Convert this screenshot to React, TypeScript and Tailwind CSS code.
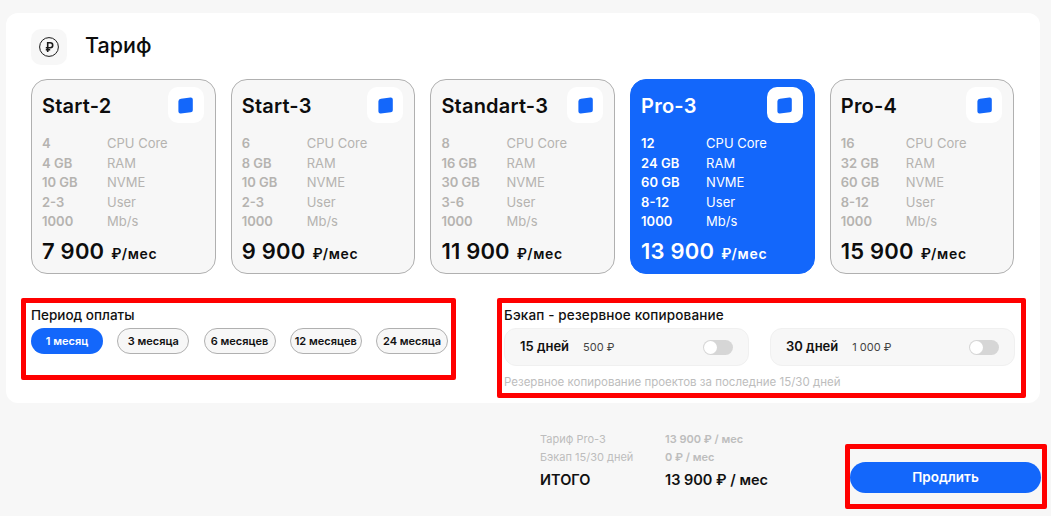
const font = { fontFamily: '"Inter", "Noto Sans", sans-serif' };

const plans = [
  { name: 'Start-2', specs: ['4', '4 GB', '10 GB', '2-3', '1000'], price: '7 900' },
  { name: 'Start-3', specs: ['6', '8 GB', '10 GB', '2-3', '1000'], price: '9 900' },
  { name: 'Standart-3', specs: ['8', '16 GB', '30 GB', '3-6', '1000'], price: '11 900' },
  { name: 'Pro-3', specs: ['12', '24 GB', '60 GB', '8-12', '1000'], price: '13 900', active: true },
  { name: 'Pro-4', specs: ['16', '32 GB', '60 GB', '8-12', '1000'], price: '15 900' },
];

const specLabels = ['CPU Core', 'RAM', 'NVME', 'User', 'Mb/s'];
const periods = ['1 месяц', '3 месяца', '6 месяцев', '12 месяцев', '24 месяца'];

const RubleIcon = () => (
  <svg width="20" height="20" viewBox="0 0 20 20" fill="none" stroke="#1a1a1a">
    <circle cx="10" cy="10" r="9.4" strokeWidth="1" />
    <path d="M8.7 15V5.8h2.5a2.5 2.5 0 0 1 0 5H6.8M6.8 12.8h4.4" strokeWidth="1.6" />
  </svg>
);

const TileIcon = () => (
  <svg width="15" height="17" viewBox="0 0 15 17" fill="#1367fb">
    <path d="M3 1.8 12.4.4A2.2 2.2 0 0 1 14.8 2.6v10.6a2.2 2.2 0 0 1-2 2.1l-10 1.2A2.2 2.2 0 0 1 .4 14.4V4.3A2.6 2.6 0 0 1 3 1.8Z" />
  </svg>
);

const Toggle = () => (
  <div className="flex h-[15px] w-[30px] items-center rounded-full bg-[#d6d6d6]">
    <div className="h-[13px] w-[13px] translate-x-px rounded-full bg-white" />
  </div>
);

const PlanCard = ({ plan }: { plan: (typeof plans)[number] }) => {
  const active = plan.active;
  return (
    <div
      className={`h-[195px] rounded-[16px] border pt-[7px] pr-[11px] pl-[10px] ${
        active ? 'border-[#1367fb] bg-[#1367fb] text-white' : 'border-[#b0b0b0] bg-[#f7f7f7] text-[#0d0d0d]'
      }`}
    >
      <div className="flex items-start justify-between">
        <div className="pt-[6px] text-[20px] leading-[26px] font-semibold tracking-[0.2px]">{plan.name}</div>
        <div className="flex h-[36px] w-[36px] items-center justify-center rounded-[10px] bg-white">
          <TileIcon />
        </div>
      </div>
      <div className={`mt-[11px] text-[13px] leading-[19.6px] ${active ? 'text-white' : 'text-[#b5b3b0]'}`}>
        {plan.specs.map((spec, i) => (
          <div key={i} className="flex">
            <div className="w-[65px] font-semibold">{spec}</div>
            <div>{specLabels[i]}</div>
          </div>
        ))}
      </div>
      <div className="mt-[4px] flex items-baseline gap-[7px]">
        <span className="text-[22px] leading-[30px] font-semibold tracking-[0.2px]">{plan.price}</span>
        <span className="text-[14px] font-semibold tracking-[0.7px]">₽/мес</span>
      </div>
    </div>
  );
};

const BackupOption = ({ days, price }: { days: string; price: string }) => (
  <div className="flex h-[38px] w-[245px] items-center gap-[14px] rounded-[12px] border border-[#f0f0f0] bg-[#f7f7f7] px-[15px]">
    <span className="text-[13px] font-semibold text-[#111]">{days}</span>
    <span className="text-[11px] text-[#444]">{price}</span>
    <div className="ml-auto">
      <Toggle />
    </div>
  </div>
);

export default function App() {
  return (
    <div style={font} className="h-[516px] w-[1051px] overflow-hidden bg-[#f7f7f7] pt-[13px] pl-[6px]">
      <div className="h-[390px] w-[1034px] rounded-[12px] bg-white">
        <div className="flex items-center gap-[18px] pt-[16px] pl-[25px]">
          <div className="flex h-[36px] w-[36px] items-center justify-center rounded-[10px] bg-[#f7f7f7]">
            <RubleIcon />
          </div>
          <div className="mt-[-4px] text-[21.5px] font-medium text-[#0d0d0d]">Тариф</div>
        </div>

        <div className="mt-[14px] ml-[25px] grid w-[983.5px] grid-cols-5 gap-[15px]">
          {plans.map((plan) => (
            <PlanCard key={plan.name} plan={plan} />
          ))}
        </div>

        <div className="mt-[24px] ml-[15px] flex items-start gap-[41px]">
          <div className="h-[82px] w-[435px] rounded-[2px] border-[5px] border-[#ff0000] pt-[4px] pl-[5px]">
            <div className="text-[13.5px] leading-[16px] font-medium text-[#111]">Период оплаты</div>
            <div className="mt-[5px] flex w-[417px] justify-between">
              {periods.map((period, i) => (
                <div
                  key={period}
                  className={`flex h-[26px] w-[72px] items-center justify-center rounded-full text-[11px] font-semibold whitespace-nowrap ${
                    i === 0 ? 'bg-[#1367fb] text-white' : 'border border-[#b0b0b0] bg-[#f7f7f7] text-[#111]'
                  }`}
                >
                  {period}
                </div>
              ))}
            </div>
          </div>

          <div className="h-[100px] w-[529px] rounded-[2px] border-[5px] border-[#ff0000] pt-[4px] pl-[2px]">
            <div className="text-[13.5px] leading-[16px] font-medium tracking-[0.15px] text-[#111]">
              Бэкап - резервное копирование
            </div>
            <div className="mt-[5px] flex gap-[21px]">
              <BackupOption days="15 дней" price="500 ₽" />
              <BackupOption days="30 дней" price="1 000 ₽" />
            </div>
            <div className="mt-[9px] text-[11.5px] leading-[14px] text-[#bdbdbd]">
              Резервное копирование проектов за последние 15/30 дней
            </div>
          </div>
        </div>
      </div>

      <div className="mt-[41px] flex items-start">
        <div className="mt-[-14px] ml-[534px] w-[305px] text-[11px]">
          <div className="flex h-[18px] items-center text-[#bdbdbd]">
            <span className="w-[125px]">Тариф Pro-3</span>
            <span className="font-semibold">13 900 ₽ / мес</span>
          </div>
          <div className="flex h-[18px] items-center text-[#bdbdbd]">
            <span className="w-[125px]">Бэкап 15/30 дней</span>
            <span className="font-semibold">0 ₽ / мес</span>
          </div>
          <div className="mt-[2px] flex h-[24px] items-center text-[14.5px] font-semibold text-[#111]">
            <span className="w-[125px]">ИТОГО</span>
            <span>13 900 ₽ / мес</span>
          </div>
        </div>
        <div className="h-[65px] w-[202px] rounded-[2px] border-[5px] border-[#ff0000] pt-[13px]">
          <div className="flex h-[31px] w-[191px] items-center justify-center rounded-full bg-[#1367fb] text-[13.5px] font-semibold text-white">
            Продлить
          </div>
        </div>
      </div>
    </div>
  );
}
